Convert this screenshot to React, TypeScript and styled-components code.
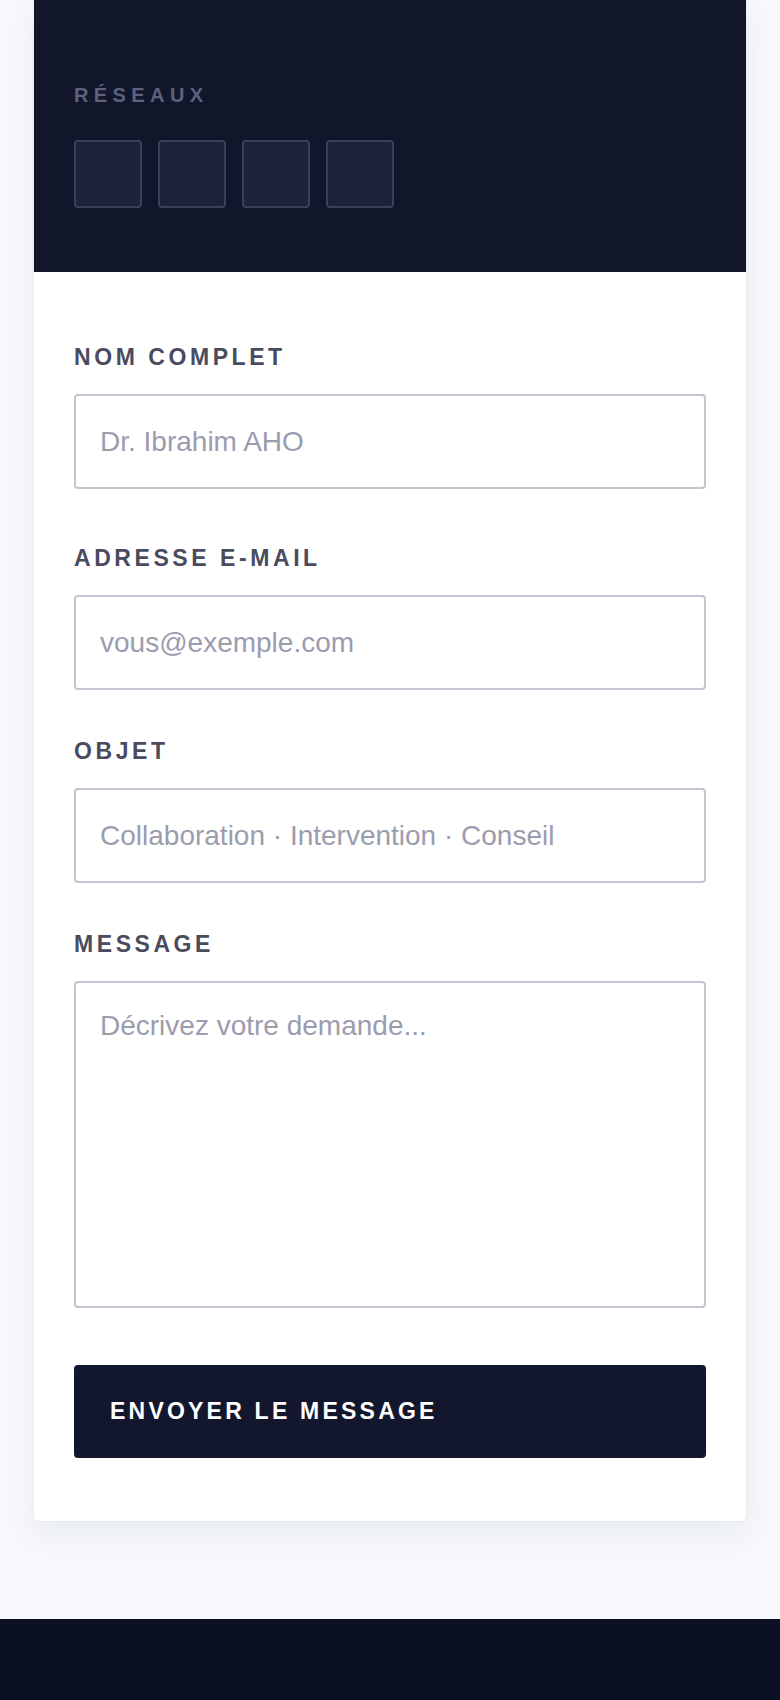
import React from "react";
import styled, { createGlobalStyle } from "styled-components";

const GlobalStyle = createGlobalStyle`
  * { box-sizing: border-box; }
  html, body { margin: 0; padding: 0; }
  body {
    background: #f6f8fb;
    font-family: "Liberation Sans", Arial, sans-serif;
  }
`;

const Page = styled.div`
  display: flex;
  flex-direction: column;
  min-height: 1700px;
`;

const Container = styled.main`
  padding: 0 34px 98px;
`;

const Card = styled.section`
  background: #ffffff;
  border-radius: 0 0 5px 5px;
  box-shadow: 0 12px 32px rgba(20, 26, 60, 0.06), 0 0 0 1px rgba(20, 26, 60, 0.03);
  overflow: hidden;
`;

const InfoPanel = styled.div`
  background: #12162b;
  padding: 84px 40px 64px;
`;

const PanelTitle = styled.h3`
  margin: 0 0 34px;
  font-size: 20px;
  line-height: 22px;
  font-weight: 700;
  letter-spacing: 0.27em;
  color: #5d627c;
  text-transform: uppercase;
`;

const Socials = styled.div`
  display: flex;
  gap: 16px;
`;

const SocialLink = styled.a`
  display: block;
  width: 68px;
  height: 68px;
  border: 2px solid #3b405a;
  border-radius: 4px;
  background: #1d2139;
`;

const Form = styled.form`
  display: flex;
  flex-direction: column;
  padding: 72px 40px 63px;
`;

const Field = styled.div<{ $gap: number }>`
  display: flex;
  flex-direction: column;
  margin-bottom: ${(p) => p.$gap}px;
`;

const Label = styled.label`
  margin: 0 0 24px;
  font-size: 23px;
  line-height: 26px;
  font-weight: 700;
  letter-spacing: 0.155em;
  color: #4a4b5e;
  text-transform: uppercase;
`;

const inputBase = `
  width: 100%;
  border: 2px solid #c4c5d2;
  border-radius: 4px;
  background: #ffffff;
  font-family: "Liberation Sans", Arial, sans-serif;
  font-size: 28px;
  color: #2a2c3a;
  outline: none;
  &::placeholder { color: #9b9cad; opacity: 1; }
`;

const Input = styled.input`
  ${inputBase}
  height: 95px;
  padding: 0 24px;
`;

const TextArea = styled.textarea`
  ${inputBase}
  height: 327px;
  padding: 27px 24px;
  line-height: 32px;
  resize: none;
  display: block;
`;

const SubmitButton = styled.button`
  height: 93px;
  border: none;
  border-radius: 4px;
  background: #12172d;
  color: #ffffff;
  padding: 0 36px;
  text-align: left;
  font-family: "Liberation Sans", Arial, sans-serif;
  font-size: 23px;
  font-weight: 700;
  letter-spacing: 0.14em;
  text-transform: uppercase;
  cursor: pointer;
`;

const Footer = styled.footer`
  background: #0b1025;
  height: 140px;
`;

export default function App() {
  return (
    <>
      <GlobalStyle />
      <Page>
        <Container>
          <Card>
            <InfoPanel>
              <PanelTitle>Réseaux</PanelTitle>
              <Socials>
                <SocialLink href="#" aria-label="LinkedIn" />
                <SocialLink href="#" aria-label="Twitter" />
                <SocialLink href="#" aria-label="ResearchGate" />
                <SocialLink href="#" aria-label="Google Scholar" />
              </Socials>
            </InfoPanel>
            <Form onSubmit={(e) => e.preventDefault()}>
              <Field $gap={56}>
                <Label htmlFor="name">Nom complet</Label>
                <Input id="name" type="text" placeholder="Dr. Ibrahim AHO" />
              </Field>
              <Field $gap={48}>
                <Label htmlFor="email">Adresse e-mail</Label>
                <Input id="email" type="email" placeholder="vous@exemple.com" />
              </Field>
              <Field $gap={48}>
                <Label htmlFor="subject">Objet</Label>
                <Input
                  id="subject"
                  type="text"
                  placeholder="Collaboration · Intervention · Conseil"
                />
              </Field>
              <Field $gap={57}>
                <Label htmlFor="message">Message</Label>
                <TextArea id="message" placeholder="Décrivez votre demande..." />
              </Field>
              <SubmitButton type="submit">Envoyer le message</SubmitButton>
            </Form>
          </Card>
        </Container>
        <Footer />
      </Page>
    </>
  );
}
